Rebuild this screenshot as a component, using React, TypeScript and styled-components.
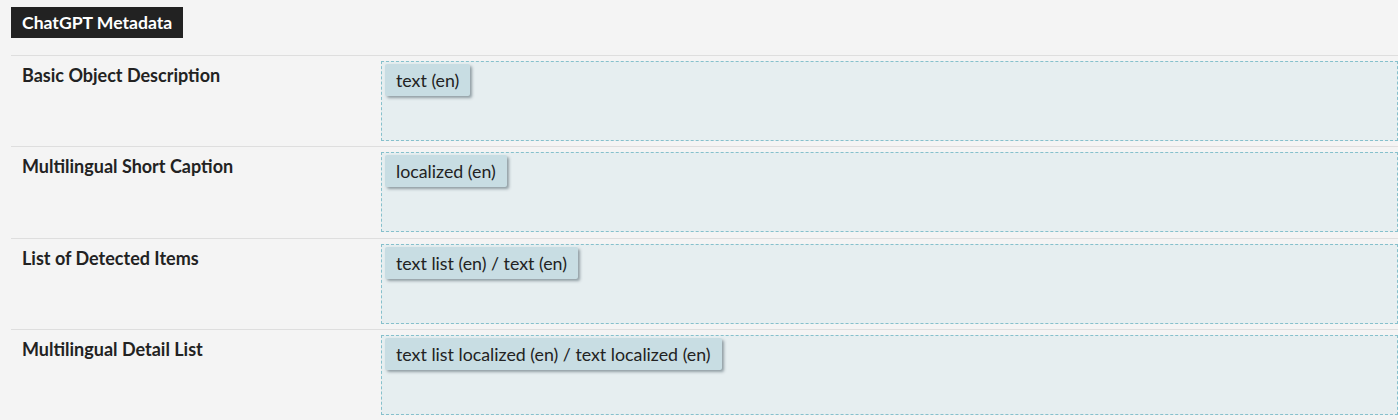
import React from "react";
import styled, { createGlobalStyle } from "styled-components";

const Global = createGlobalStyle`
  html, body { margin: 0; padding: 0; background: #f4f4f4; }
  body { font-family: Lato, "Noto Sans", sans-serif; color: #222; }
`;

const Page = styled.div`
  padding: 7px 0 0 11px;
  width: 1398px;
  box-sizing: border-box;
`;

const Title = styled.div`
  display: inline-block;
  background: #222;
  color: #fff;
  font-weight: 700;
  font-size: 17.6px;
  line-height: 31px;
  height: 31px;
  padding: 0 11px;
`;

const Rows = styled.div`
  margin-top: 17px;
`;

const Row = styled.div`
  display: grid;
  grid-template-columns: 370px 1fr;
  border-top: 1px solid #dedede;
  padding: 5px 0 5.33px;
`;

const Label = styled.div`
  padding: 3px 0 0 11px;
  font-weight: 700;
  font-size: 18px;
  line-height: 22px;
`;

const Drop = styled.div`
  height: 80px;
  box-sizing: border-box;
  background: #e6eef0;
  border: 1px dashed #86c0cc;
  padding: 2px 3px;
  display: flex;
  align-items: flex-start;
`;

const Chip = styled.div`
  background: #c8dde3;
  border-radius: 2px;
  box-shadow: 2px 2px 3px rgba(40, 60, 70, 0.45);
  font-size: 17.8px;
  line-height: 32px;
  height: 32px;
  padding: 0 11px;
  white-space: nowrap;
`;

const data = [
  ["Basic Object Description", "text (en)"],
  ["Multilingual Short Caption", "localized (en)"],
  ["List of Detected Items", "text list (en) / text (en)"],
  ["Multilingual Detail List", "text list localized (en) / text localized (en)"],
];

export default function App() {
  return (
    <>
      <Global />
      <Page>
        <Title>ChatGPT Metadata</Title>
        <Rows>
          {data.map(([l, c]) => (
            <Row key={l}>
              <Label>{l}</Label>
              <Drop>
                <Chip>{c}</Chip>
              </Drop>
            </Row>
          ))}
        </Rows>
      </Page>
    </>
  );
}
